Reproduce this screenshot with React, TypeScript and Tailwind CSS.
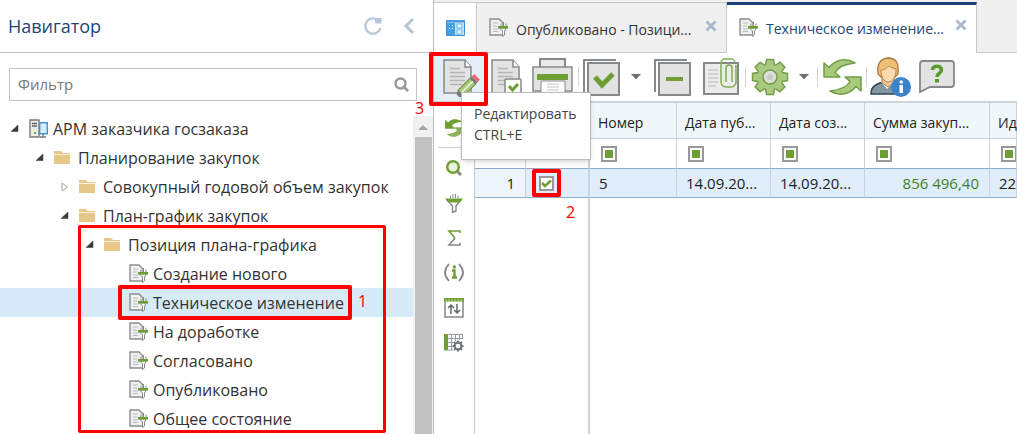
import type { ReactNode } from "react";

const DOC_FILL = "#e3e3e3";

function DocFunnel() {
  return (
    <svg width="19" height="19" viewBox="0 0 19 19" className="shrink-0" aria-hidden="true">
      <path d="M1 1h9l4 4v12H1z" fill="#f0f0f0" stroke="#8b8e90" strokeWidth="1.4" />
      <path d="M4 5h5M4 8h4M4 11h5M4 13.500h5" stroke="#b9bbbc" />
      <path d="M10.500 10h7l-2 3v4l-2 1.500V13z" fill="#fff" stroke="#85898b" />
      <path d="M9 8h10v2.500H9z" fill="#6f9f33" />
      <path d="M12 5.500V8M14.500 4v4M17 5.500V8" stroke="#85898b" />
    </svg>
  );
}

function Folder() {
  return (
    <svg width="16" height="13" viewBox="0 0 16 13" className="shrink-0" aria-hidden="true">
      <path d="M0 0h7l2 2h7v1H0z" fill="#e8c888" />
      <path d="M0 4h16v9H0z" fill="#e8c888" />
      <path d="M0 3.500h16" stroke="#fbf3df" />
    </svg>
  );
}

function Workstation() {
  return (
    <svg width="19" height="20" viewBox="0 0 19 20" className="shrink-0" aria-hidden="true">
      <path d="M1 1h9v17H1z" fill="#ececec" stroke="#777b7e" strokeWidth="1.400" />
      <path d="M3 4.500h5M3 7h5" stroke="#666" strokeWidth="1.400" />
      <path d="M5 13h2v2H5z" fill="#69a844" />
      <path d="M10.700 3.700h7.600v11h-7.600z" fill="#d8effb" stroke="#4a92d0" strokeWidth="1.400" />
      <path d="M11 18h6M14 15v3" stroke="#777b7e" strokeWidth="1.400" />
    </svg>
  );
}

function Arrow({ open }: { open: boolean }) {
  return open ? (
    <svg width="8" height="7" viewBox="0 0 8 7" aria-hidden="true">
      <path d="M7 0v6.500H0z" fill="#3b3b3b" stroke="#3b3b3b" strokeWidth="0.500" />
    </svg>
  ) : (
    <svg width="8" height="10" viewBox="0 0 8 10" aria-hidden="true">
      <path d="M1 1l5.500 4L1 9z" fill="#fff" stroke="#a5a5a5" />
    </svg>
  );
}

const NODES = [
  { label: "АРМ заказчика госзаказа", pad: "pl-[11px]", kind: "root", open: true },
  { label: "Планирование закупок", pad: "pl-[36px]", kind: "folder", open: true },
  { label: "Совокупный годовой объем закупок", pad: "pl-[61px]", kind: "folder", open: false },
  { label: "План-график закупок", pad: "pl-[61px]", kind: "folder", open: true },
  { label: "Позиция плана-графика", pad: "pl-[86px]", kind: "folder", open: true },
  { label: "Создание нового", pad: "pl-[111px]", kind: "doc", open: false },
  { label: "Техническое изменение", pad: "pl-[111px]", kind: "doc", open: false },
  { label: "На доработке", pad: "pl-[111px]", kind: "doc", open: false },
  { label: "Согласовано", pad: "pl-[111px]", kind: "doc", open: false },
  { label: "Опубликовано", pad: "pl-[111px]", kind: "doc", open: false },
  { label: "Общее состояние", pad: "pl-[111px]", kind: "doc", open: false },
];

function Navigator() {
  return (
    <aside className="relative flex w-[434px] shrink-0 flex-col border-r border-[#bdbdbd]">
      <header className="flex h-[53px] items-center border-b border-[#c4c4c4] pl-2 pr-[18px]">
        <h1 className="flex-1 text-lg text-[#23457c]">Навигатор</h1>
        <button aria-label="Обновить" className="mr-5">
          <svg width="20" height="20" viewBox="0 0 20 20">
            <path d="M15.500 4.500A7.700 7.700 0 1 0 17.500 12" fill="none" stroke="#b6c6d8" strokeWidth="2.200" />
            <path d="M12 2h6.500v5.500H12z" fill="#b6c6d8" />
          </svg>
        </button>
        <button aria-label="Свернуть">
          <svg width="12" height="18" viewBox="0 0 12 18">
            <path d="M10 2L3 9l7 7" fill="none" stroke="#b6c6d8" strokeWidth="3" />
          </svg>
        </button>
      </header>
      <label className="ml-[9px] mr-4 mt-[15px] flex h-[33px] items-center border border-[#c4c4c4] pl-2 pr-[7px]">
        <input
          aria-label="Фильтр"
          placeholder="Фильтр"
          className="min-w-0 flex-1 text-[15px] outline-none placeholder:text-[#777]"
        />
        <svg width="15" height="15" viewBox="0 0 15 15" aria-hidden="true">
          <circle cx="6.500" cy="6.500" r="5" fill="none" stroke="#999" strokeWidth="2.400" />
          <path d="M9 9l5 5" stroke="#999" strokeWidth="2.600" />
        </svg>
      </label>
      <div className="flex min-h-0 flex-1 pt-[13px]">
        <ul className="min-w-0 flex-1 text-base text-[#333]">
          {NODES.map((n) => (
            <li key={n.label}>
              <button
                className={`flex h-[29px] w-full items-center whitespace-nowrap ${n.pad} ${
                  n.label === "Техническое изменение" ? "bg-[#d7eaf7]" : ""
                }`}
              >
                <span className="flex w-[18px] shrink-0">{n.kind !== "doc" && <Arrow open={n.open} />}</span>
                <span className="mr-[5px] flex w-[19px] shrink-0">
                  {n.kind === "root" ? <Workstation /> : n.kind === "folder" ? <Folder /> : <DocFunnel />}
                </span>
                {n.label}
              </button>
            </li>
          ))}
        </ul>
        <div className="mt-[2px] flex w-5 shrink-0 flex-col items-center bg-[#f1f1f1]">
          <svg width="10" height="21" viewBox="0 0 10 21" aria-hidden="true">
            <path d="M0 14l5-5 5 5z" fill="#a3a3a3" />
          </svg>
          <div className="w-[17px] flex-1 bg-[#c1c1c1]" />
        </div>
      </div>
      <div className="pointer-events-none absolute left-[78px] top-[225px] h-[208px] w-[308px] rounded-xs border-3 border-[#fe0000]" />
      <div className="pointer-events-none absolute left-[118px] top-[285px] h-[35px] w-[234px] rounded-xs border-4 border-[#fe0000]" />
      <span className="absolute left-[358px] top-[289px] text-base text-[#fe0000]">1</span>
      <span className="absolute left-[415px] top-[96px] text-base text-[#fe0000]">3</span>
    </aside>
  );
}

function CloseX() {
  return (
    <svg width="12" height="12" viewBox="0 0 12 12" aria-hidden="true">
      <path d="M1.500 1.500l9 9M10.500 1.500l-9 9" stroke="#a9b9cf" strokeWidth="2.800" />
    </svg>
  );
}

function Tab({ label, active }: { label: string; active: boolean }) {
  return (
    <div
      className={`flex w-[250px] shrink-0 items-center border-r border-[#c8c8c8] pl-3 pr-[9px] ${
        active
          ? "border-t-3 border-t-[#1d3f78] bg-white pb-1 text-[#23457c]"
          : "border-b border-t bg-[#f0f0f0] text-[#333]"
      }`}
    >
      <DocFunnel />
      <button className="ml-2 flex-1 whitespace-nowrap pt-1 text-left text-sm">{label}</button>
      <button aria-label="Закрыть" className="mb-1">
        <CloseX />
      </button>
    </div>
  );
}

function Tool({ label, width, children }: { label: string; width: string; children: ReactNode }) {
  return (
    <button aria-label={label} className={`flex h-10 shrink-0 items-center justify-center ${width}`}>
      {children}
    </button>
  );
}

function Sep() {
  return <span className="h-5 w-px shrink-0 bg-[#d4d4d4]" />;
}

function Caret() {
  return (
    <svg width="10" height="6" viewBox="0 0 10 6" aria-hidden="true">
      <path d="M0 0h10L5 5.500z" fill="#6d6f71" />
    </svg>
  );
}

function Sheet() {
  return (
    <>
      <path d="M1 2h21l6 7v26H1z" fill={DOC_FILL} stroke="#85898b" strokeWidth="1.500" />
      <path d="M22 2v7h6" fill="#fff" stroke="#85898b" strokeWidth="1.500" />
      <path d="M7 10.500h10M7 14.500h15M7 18.500h15M7 22.500h15M7 26.500h12" stroke="#b5b5b5" strokeWidth="1.400" />
    </>
  );
}

function Toolbar() {
  return (
    <div className="relative flex h-[50px] shrink-0 items-center border-b-2 border-[#cfd3d6]">
      <Tool label="Редактировать" width="h-12 bg-[#e6eef8] w-[52px] mr-1 pl-1">
        <svg width="38" height="39" viewBox="0 0 38 39">
          <Sheet />
          <g transform="translate(15 38) rotate(-45)">
            <path d="M4-4h17v8H4z" fill="#a6c879" stroke="#6d8f45" />
            <path d="M4 0h17" stroke="#eef6df" strokeWidth="1.500" />
            <path d="M21-4h2.500v8H21z" fill="#777" />
            <path d="M23.500-4H27v8h-3.500z" fill="#ee6571" />
            <path d="M0-2l4-2v8L0 2z" fill="#777" />
          </g>
        </svg>
      </Tool>
      <Tool label="Просмотр" width="w-[34px]">
        <svg width="32" height="39" viewBox="0 0 32 39">
          <Sheet />
          <rect x="14" y="21" width="16" height="16" rx="1" fill="#fff" stroke="#85898b" strokeWidth="1.500" />
          <path d="M18 28l3.500 4 5.500-6" fill="none" stroke="#6f9f33" strokeWidth="3" />
        </svg>
      </Tool>
      <Tool label="Печать" width="ml-2 w-[42px]">
        <svg width="42" height="39" viewBox="0 0 42 39">
          <path d="M8 9V1h25v8" fill="#e9e9e9" stroke="#85898b" strokeWidth="2" />
          <path d="M1 9h39v24H1z" fill={DOC_FILL} stroke="#85898b" strokeWidth="1.500" />
          <path d="M5 16h31v6H5z" fill="#6f9f33" />
          <path d="M9 23h24v14H9z" fill="#fff" stroke="#85898b" />
          <path d="M15 26h12M15 29h12M15 32h12" stroke="#c2c2c2" />
        </svg>
      </Tool>
      <span className="w-1" />
      <Sep />
      <Tool label="Отметить" width="ml-[3px] w-[40px]">
        <svg width="40" height="39" viewBox="0 0 40 39">
          <path d="M2 34V2h32" fill="none" stroke="#85898b" strokeWidth="2" />
          <path d="M6 5h31v32H6z" fill={DOC_FILL} stroke="#85898b" strokeWidth="2" />
          <path d="M13 19l7 8 11-11" fill="none" stroke="#6f9f33" strokeWidth="5" />
        </svg>
      </Tool>
      <Tool label="Варианты отметки" width="w-[28px]">
        <Caret />
      </Tool>
      <Tool label="Снять отметку" width="ml-[3px] w-[40px]">
        <svg width="40" height="39" viewBox="0 0 40 39">
          <path d="M2 34V2h32" fill="none" stroke="#85898b" strokeWidth="2" />
          <path d="M6 5h31v32H6z" fill={DOC_FILL} stroke="#85898b" strokeWidth="2" />
          <path d="M13 19h17v4H13z" fill="#6f9f33" />
        </svg>
      </Tool>
      <Tool label="Вложения" width="ml-2 w-[40px]">
        <svg width="38" height="39" viewBox="0 0 38 39">
          <path d="M2 5h34v31H2z" fill="#ececec" stroke="#85898b" strokeWidth="2" />
          <path d="M6 12h10M6 16h10M6 20h10M6 24h10M6 28h8" stroke="#b5b5b5" />
          <path
            d="M34 7v17a5 5 0 0 1-5 5h-5a5 5 0 0 1-5-5V5a4 4 0 0 1 4-4h6a4 4 0 0 1 4 4M24 24V10a3 3 0 0 1 6 0v14"
            fill="none"
            stroke="#7eae4c"
            strokeWidth="1.500"
          />
        </svg>
      </Tool>
      <span className="w-1" />
      <Sep />
      <Tool label="Настройки" width="ml-1 w-[40px]">
        <Gear />
      </Tool>
      <Tool label="Варианты настройки" width="w-[27px]">
        <Caret />
      </Tool>
      <Sep />
      <Tool label="Обновить" width="ml-1 w-[40px]">
        <RefreshArrows />
      </Tool>
      <span className="w-1" />
      <Sep />
      <Tool label="Сведения о пользователе" width="ml-[3px] w-[42px]">
        <svg width="42" height="42" viewBox="0 0 42 42">
          <path d="M1 38c0-7 4-10 13-12l12 1c5 3 6 6 6 11z" fill="#8195a3" stroke="#2f4453" strokeWidth="1.500" />
          <path d="M11 26h13l-7 7z" fill="#fff" />
          <path d="M12 20h12v7l-6 4-6-4z" fill="#f4c894" stroke="#ae7b3e" />
          <path d="M8 18C7 9 9 3 18 2c9 0 11 6 10 16l-3 3H11z" fill="#edbf77" stroke="#a8793d" strokeWidth="1.300" />
          <path d="M11 14c5 0 6-3 8-4 2 2 4 2 7 3 0 8-3 13-8 13-4 0-7-5-7-12z" fill="#fbdcb0" stroke="#b98546" />
          <circle cx="31" cy="31" r="10" fill="#3c82c8" />
          <path d="M29.500 29h3.500v8h-3.500z" fill="#fff" />
          <circle cx="31.200" cy="26" r="1.800" fill="#fff" />
        </svg>
      </Tool>
      <Tool label="Справка" width="ml-[6px] w-[38px]">
        <svg width="38" height="36" viewBox="0 0 38 36">
          <path d="M4 2h29q3 0 3 3v20q0 3-3 3H12l-10 5V5q0-3 3-3z" fill={DOC_FILL} stroke="#85898b" strokeWidth="1.800" />
          <path d="M14.500 11c0-5 9-5 9 0 0 3.500-4.500 3-4.500 7" fill="none" stroke="#579c2a" strokeWidth="3.600" />
          <path d="M17 20h4v3.500h-4z" fill="#579c2a" />
        </svg>
      </Tool>
    </div>
  );
}

const GEAR_TEETH = [0, 45, 90, 135, 180, 225, 270, 315];

function Gear() {
  return (
    <svg width="38" height="38" viewBox="0 0 38 38" aria-hidden="true">
      {GEAR_TEETH.map((a) => (
        <path
          key={a}
          d="M14 10l1.500-8.500h7L24 10z"
          transform={`rotate(${a} 19 19)`}
          fill="#a9c97f"
          stroke="#739f49"
          strokeWidth="1.500"
        />
      ))}
      <circle cx="19" cy="19" r="12.500" fill="#a9c97f" />
      <circle cx="19" cy="19" r="7" fill="#dedede" stroke="#739f49" strokeWidth="1.500" />
      <circle cx="19" cy="19" r="3" fill="#c9c9c9" />
    </svg>
  );
}

const HALF_TURN = "M1 5L1 19H17L12 14.500C15 9 22 6 32 5C22-1 12 2 6 9.500Z";

function RefreshArrows() {
  return (
    <svg width="39" height="38" viewBox="0 0 39 38" aria-hidden="true">
      <path d={HALF_TURN} fill="#a9c97f" stroke="#6f9f43" strokeWidth="1.500" strokeLinejoin="round" />
      <path
        d={HALF_TURN}
        transform="rotate(180 19.5 19)"
        fill="#a9c97f"
        stroke="#6f9f43"
        strokeWidth="1.500"
        strokeLinejoin="round"
      />
    </svg>
  );
}

function SideButton({ label, children }: { label: string; children: ReactNode }) {
  return (
    <button aria-label={label} className="flex h-[35px] w-full items-center justify-center">
      {children}
    </button>
  );
}

function SideBar() {
  return (
    <div className="flex w-[41px] shrink-0 flex-col items-center border-r border-[#c8c8c8] pt-[7px]">
      <SideButton label="Обновить список">
        <svg width="19" height="18" viewBox="0 0 39 38">
          <path d={HALF_TURN} fill="#6f9f33" stroke="#6f9f33" strokeWidth="3" />
          <path d={HALF_TURN} transform="rotate(180 19.5 19)" fill="#8cb45c" stroke="#8cb45c" strokeWidth="3" />
        </svg>
      </SideButton>
      <span className="my-[2px] h-px w-8 bg-[#cfcfcf]" />
      <SideButton label="Поиск">
        <svg width="18" height="18" viewBox="0 0 18 18">
          <path d="M11 11l5 5" stroke="#85898b" strokeWidth="3" />
          <circle cx="8" cy="8" r="5.800" fill="#e9f2dc" stroke="#6f9f33" strokeWidth="2.400" />
        </svg>
      </SideButton>
      <SideButton label="Фильтр">
        <svg width="18" height="20" viewBox="0 0 18 20">
          <path d="M3 8h12l-4 5v5l-3.500 1.500V13z" fill="#fff" stroke="#85898b" strokeWidth="1.400" />
          <path d="M0 5.500h18l-3 4H3z" fill="#6f9f33" />
          <path d="M5.500 2.500V5M8 1v4M10.500 1v4M13 2.500V5" stroke="#85898b" />
        </svg>
      </SideButton>
      <SideButton label="Итоги">
        <svg width="14" height="16" viewBox="0 0 14 16">
          <path d="M13 3V1H2l6 7" fill="none" stroke="#6f9f33" strokeWidth="1.600" />
          <path d="M8 8l-6 7h11v-2" fill="none" stroke="#85898b" strokeWidth="1.600" />
        </svg>
      </SideButton>
      <SideButton label="Информация">
        <svg width="20" height="19" viewBox="0 0 20 19">
          <path d="M5 1Q-3 9.500 5 18M15 1q8 8.500 0 17" fill="none" stroke="#85898b" strokeWidth="1.800" />
          <path d="M8 7.500h2.500V14M8 14.500h5" fill="none" stroke="#6f9f33" strokeWidth="2.400" />
          <circle cx="10.300" cy="4" r="1.700" fill="#6f9f33" />
        </svg>
      </SideButton>
      <SideButton label="Сортировка">
        <svg width="20" height="20" viewBox="0 0 20 20">
          <path d="M1 1h18v18H1z" fill="#fff" stroke="#85898b" strokeWidth="1.500" />
          <path d="M0 0h20v3.500H0z" fill="#6f9f33" />
          <path d="M1 2h18" stroke="#b9d393" strokeDasharray="2 1" />
          <path d="M7 16V7M4 10l3-3 3 3M13 6v9M10 12l3 3 3-3" fill="none" stroke="#66696b" strokeWidth="1.500" />
        </svg>
      </SideButton>
      <SideButton label="Настройка таблицы">
        <svg width="20" height="18" viewBox="0 0 20 18">
          <path d="M0 .5h19M0 4.500h19M0 8.500h10M0 12.500h9M0 16h9M7.500 0v16M11.500 0v7M15.500 0v6M18.500 0v5" stroke="#9a9d9f" />
          <path d="M0 0h4v16H0z" fill="#6f9f33" />
          <circle cx="14" cy="12" r="3.400" fill="#fff" stroke="#75797b" strokeWidth="2.200" />
          <path
            d="M14 6.500v2M14 15.500v2M8.500 12h2M17.500 12h2M10 8l1.500 1.500M16.500 14.500L18 16M10 16l1.500-1.500M16.500 9.500L18 8"
            stroke="#75797b"
            strokeWidth="2"
          />
        </svg>
      </SideButton>
    </div>
  );
}

const COLUMNS = [
  { title: "Номер", value: "5" },
  { title: "Дата пуб...", value: "14.09.20..." },
  { title: "Дата соз...", value: "14.09.20..." },
  { title: "Сумма закуп...", value: "856 496,40" },
  { title: "Ид", value: "22" },
];

function FilterMark() {
  return (
    <button aria-label="Фильтр столбца" className="flex size-4 items-center justify-center border-2 border-[#999]">
      <span className="size-2 bg-[#6f9f33]" />
    </button>
  );
}

function Grid() {
  return (
    <div className="min-w-0 flex-1 overflow-hidden">
      <table className="h-full w-full table-fixed border-separate border-spacing-0 whitespace-nowrap text-left text-sm text-[#222]">
        <colgroup>
          <col className="w-[51px]" />
          <col className="w-[64px]" />
          <col className="w-[87px]" />
          <col className="w-[94px]" />
          <col className="w-[94px]" />
          <col className="w-[125px]" />
          <col />
        </colgroup>
        <thead>
          <tr className="h-9 bg-[#f0f7fb]">
            <th className="border-b border-r border-[#cbd3da]" />
            <th className="border-b border-r-2 border-[#cbd5df]" />
            {COLUMNS.map((c) => (
              <th key={c.title} className="border-b border-r border-[#cbd3da] pb-0 pl-2 pt-1 font-normal">
                {c.title}
              </th>
            ))}
          </tr>
          <tr className="h-[29px]">
            <td className="border-r border-[#cbd3da]" />
            <td className="border-r-2 border-[#cbd5df]" />
            {COLUMNS.map((c) => (
              <td key={c.title} className="overflow-hidden border-r border-[#cbd3da] pl-[11px]">
                <FilterMark />
              </td>
            ))}
          </tr>
        </thead>
        <tbody>
          <tr className="h-[30px] bg-[#e0edfa] text-[15px]">
            <td className="border-y border-r border-[#8fabcb] border-r-[#cbd3da] bg-[#edf5fb] pb-0 pr-[10px] pt-[2px] text-right">1</td>
            <td className="border-y border-r-2 border-[#8fabcb] border-r-[#cbd5df] p-0">
              <div className="relative ml-[6px] flex h-7 w-[29px] items-center justify-center">
                <input
                  type="checkbox"
                  aria-label="Выбрать строку 1"
                  defaultChecked
                  className="size-[15px] appearance-none border-2 border-[#999] bg-white"
                />
                <svg width="11" height="9" viewBox="0 0 11 9" className="pointer-events-none absolute" aria-hidden="true">
                  <path d="M1 4l3 3 6-5.500" fill="none" stroke="#6f9f33" strokeWidth="2.600" />
                </svg>
                <span className="pointer-events-none absolute inset-0 rounded-xs border-4 border-[#fe0000]" />
              </div>
            </td>
            {COLUMNS.map((c) => (
              <td
                key={c.title}
                className={`overflow-hidden border-y border-r border-[#8fabcb] border-r-[#cbd3da] pb-0 pt-[2px] ${
                  c.title === "Сумма закуп..." ? "pr-[10px] text-right text-[#3f7f2f]" : "pl-[9px]"
                }`}
              >
                {c.value}
              </td>
            ))}
          </tr>
          <tr>
            <td />
            <td className="relative border-r-2 border-[#cbd5df] align-top">
              <span className="absolute left-10 top-[2px] text-base text-[#fe0000]">2</span>
            </td>
            <td colSpan={5} />
          </tr>
        </tbody>
      </table>
    </div>
  );
}

function Workspace() {
  return (
    <main className="relative flex min-w-0 flex-1 flex-col">
      <div className="flex h-[53px] shrink-0 bg-[#f0f0f0] pt-[2px]">
        <button
          aria-label="Рабочий стол"
          className="flex w-[43px] shrink-0 items-center justify-center border-r border-t border-[#c8c8c8] bg-white"
        >
          <svg width="19" height="16" viewBox="0 0 19 16">
            <path d="M.5.500h18v15H.5z" fill="#bfe3f8" stroke="#3f8fd2" />
            <path d="M0 0h19v2.500H0z" fill="#4a9add" />
            <path d="M1 3h8v12H1z" fill="#3fa0e4" />
            <path d="M3 5h1v1H3zM6 5h1v1H6zM3 8h1v1H3zM6 8h1v1H6z" fill="#fff" />
            <path d="M11 4h5v4h-5zM11 10h5v4h-5z" fill="#e9f6fd" stroke="#75b7e4" />
          </svg>
        </button>
        <Tab label="Опубликовано - Позици..." active={false} />
        <Tab label="Техническое изменение..." active />
        <span className="flex-1 border-b border-[#c8c8c8]" />
      </div>
      <Toolbar />
      <div className="flex min-h-0 flex-1">
        <SideBar />
        <Grid />
      </div>
      <div
        role="tooltip"
        className="absolute left-[27px] top-[92px] w-[130px] border border-[#bbb] bg-white px-3 pb-[14px] pt-[10px] text-sm leading-[21px] text-[#444] shadow-md"
      >
        Редактировать
        <br />
        CTRL+E
      </div>
      <span className="pointer-events-none absolute -left-[5px] top-[52px] h-[54px] w-[59px] rounded-xs border-4 border-[#fe0000]" />
    </main>
  );
}

export default function App() {
  return (
    <div className="flex h-screen min-h-[434px] overflow-hidden bg-white font-['Open_Sans','Noto_Sans',sans-serif]">
      <Navigator />
      <Workspace />
    </div>
  );
}
